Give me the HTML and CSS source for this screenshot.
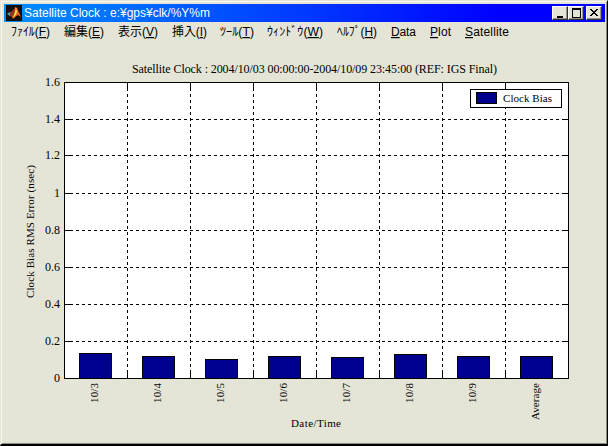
FILE: index.html
```html
<!DOCTYPE html>
<html lang="ja">
<head>
  <meta charset="UTF-8">
  <title>Satellite Clock</title>
  <link rel="stylesheet" href="styles.css">
</head>
<body>
  <div class="window">
    <div class="titlebar">
      <svg class="logo" width="16" height="16" viewBox="0 0 16 16">
        <rect width="16" height="16" fill="#101010"/>
        <path d="M1 9 L4 7 L6 9 L4 11 Z" fill="#30b0b0"/>
        <path d="M4 8 L7 5 L10 2 L9 7 L6 12 L4 11 Z" fill="#a03018"/>
        <path d="M9 2 L11 3 L15 12 L12 10 L9 12 L7 14 L6 12 L9 7 Z" fill="#f06018"/>
        <path d="M10 2 L11 7 L9 11 L7 13 L9 7 Z" fill="#ffe050"/>
      </svg>
      <span class="title"><svg width="200" height="18"><text x="0" y="13" textLength="186">Satellite Clock : e:¥gps¥clk/%Y%m</text></svg></span>
      <div class="controls">
        <button class="control"><svg width="15" height="13"><path d="M4 9h6v2h-6z"/></svg></button>
        <button class="control"><svg width="15" height="13"><path d="M3 1h9v10h-9z M4 3v7h7v-7z" fill-rule="evenodd"/></svg></button>
        <button class="control close"><svg width="15" height="13"><path d="M3 2h2v1h1v1h2v-1h1v-1h2v1h-1v1h-1v1h-1v1h1v1h1v1h1v1h-2v-1h-1v-1h-2v1h-1v1h-2v-1h1v-1h1v-1h1v-1h-1v-1h-1v-1h-1z"/></svg></button>
      </div>
    </div>

    <svg class="menu" width="600" height="20">
      <text x="7" y="14" textLength="39" lengthAdjust="spacingAndGlyphs">ﾌｧｲﾙ(<tspan class="key">F</tspan>)</text>
      <text x="60" y="14" textLength="40" lengthAdjust="spacingAndGlyphs">編集(<tspan class="key">E</tspan>)</text>
      <text x="114" y="14" textLength="40" lengthAdjust="spacingAndGlyphs">表示(<tspan class="key">V</tspan>)</text>
      <text x="168" y="14" textLength="35" lengthAdjust="spacingAndGlyphs">挿入(<tspan class="key">I</tspan>)</text>
      <text x="216" y="14" textLength="34" lengthAdjust="spacingAndGlyphs">ﾂｰﾙ(<tspan class="key">T</tspan>)</text>
      <text x="263" y="14" textLength="56" lengthAdjust="spacingAndGlyphs">ｳｨﾝﾄﾞｳ(<tspan class="key">W</tspan>)</text>
      <text x="333" y="14" textLength="40" lengthAdjust="spacingAndGlyphs">ﾍﾙﾌﾟ(<tspan class="key">H</tspan>)</text>
      <text x="387" y="14" textLength="25"><tspan class="key">D</tspan>ata</text>
      <text x="426" y="14" textLength="21"><tspan class="key">P</tspan>lot</text>
      <text x="461" y="14" textLength="44"><tspan class="key">S</tspan>atellite</text>
    </svg>

    <svg class="chart" width="600" height="400" viewBox="4 42 600 400">
      <text x="132" y="73" textLength="365">Satellite Clock : 2004/10/03 00:00:00-2004/10/09 23:45:00 (REF: IGS Final)</text>
      <rect class="plot" x="64.5" y="82.5" width="504" height="296"/>
      <g id="grid"></g>
      <g id="bars"></g>
      <g id="labels"></g>
      <rect class="plot" x="470.5" y="89.5" width="91" height="18"/>
      <rect class="bar" x="476.5" y="92.5" width="20" height="11"/>
      <text class="small" x="503" y="102" textLength="49">Clock Bias</text>
      <text class="small" x="291" y="427" textLength="50">Date/Time</text>
      <text class="small" transform="translate(34 298) rotate(-90)" textLength="133">Clock Bias RMS Error (nsec)</text>
    </svg>
  </div>
  <script src="chart.js"></script>
</body>
</html>
```

FILE: styles.css
```css
body {
  margin: 0;
  background-color: #e5e5d7;
  overflow: hidden;
}
.window {
  box-sizing: border-box;
  width: 608px;
  height: 446px;
  padding: 3px 2px 0 3px;
  border-top: 1px solid #e5e5d7;
  border-left: 1px solid #e5e5d7;
  border-right: 1px solid #000;
  border-bottom: 2px solid #000;
  box-shadow: inset 1px 1px #f8f8f0, inset -1px -1px #8e8e78;
}
.titlebar {
  display: flex;
  align-items: center;
  height: 18px;
  padding: 0 3px 0 2px;
  background: linear-gradient(to right, #0090ff, #0000ff 82%);
}
.title {
  flex: 1;
  height: 18px;
  margin-left: 2px;
}
.title text {
  font: 12px "Liberation Sans", Arial, sans-serif;
  fill: #fff;
}
.controls {
  display: flex;
}
.control {
  box-sizing: border-box;
  width: 16px;
  height: 14px;
  padding: 0;
  border: 1px solid;
  border-color: #fff #303030 #303030 #fff;
  background-color: #e5e5d7;
  box-shadow: inset -1px -1px #96968a;
  overflow: hidden;
}
.control svg {
  display: block;
}
.close {
  margin-left: 2px;
}
.menu {
  display: block;
  font: 12px "Liberation Sans", "Noto Sans CJK JP", sans-serif;
}
.key {
  text-decoration: underline;
}
.chart {
  display: block;
  font: 12px "Liberation Serif", "Times New Roman", serif;
}
.small {
  font-size: 11px;
}
.plot {
  fill: #fff;
  stroke: #000;
}
.grid {
  stroke: #000;
  stroke-dasharray: 3 3;
}
.tick {
  stroke: #000;
}
.bar {
  fill: #00008f;
  stroke: #000;
}
```

FILE: chart.js
```js
const ns = 'http://www.w3.org/2000/svg';
const left = 64, right = 568, top_ = 82, bottom = 378;

const rows = [
  { label: '1.6', y: 82 },
  { label: '1.4', y: 119 },
  { label: '1.2', y: 155 },
  { label: '1', y: 193 },
  { label: '0.8', y: 230 },
  { label: '0.6', y: 267 },
  { label: '0.4', y: 304 },
  { label: '0.2', y: 341 },
  { label: '0', y: 378 }
];
const days = [
  { label: '10/3', y: 353 },
  { label: '10/4', y: 356 },
  { label: '10/5', y: 359 },
  { label: '10/6', y: 356 },
  { label: '10/7', y: 357 },
  { label: '10/8', y: 354 },
  { label: '10/9', y: 356 },
  { label: 'Average', y: 356 }
];

function add(parent, name, attrs, text) {
  const el = document.createElementNS(ns, name);
  for (const key in attrs) el.setAttribute(key, attrs[key]);
  if (text) el.textContent = text;
  document.getElementById(parent).appendChild(el);
}

rows.forEach((row, i) => {
  const y = row.y + 0.5;
  if (i > 0 && i < rows.length - 1) {
    add('grid', 'path', { class: 'grid', d: `M${left} ${y}H${right}` });
    add('grid', 'path', { class: 'tick', d: `M${left} ${y}h7M${right} ${y}h-5` });
  }
  add('labels', 'text', { x: 60, y: row.y + 4, 'text-anchor': 'end' }, row.label);
});

days.forEach((day, i) => {
  const x = left + 63 * i + 0.5;
  // short solid ticks at both ends of each dashed line
  if (i > 0) {
    add('grid', 'path', { class: 'grid', d: `M${x} ${top_}V${bottom}` });
    add('grid', 'path', { class: 'tick', d: `M${x} ${top_}v7M${x} ${bottom}v-7` });
  }
  add('bars', 'rect', { class: 'bar', x: x + 15, y: day.y + 0.5, width: 32, height: bottom - day.y });
  const average = day.label === 'Average';
  add('labels', 'text', {
    class: 'small',
    transform: `translate(${x + 33.5} ${average ? 420 : 403}) rotate(-90)`,
    textLength: average ? 37 : 20
  }, day.label);
});
```
